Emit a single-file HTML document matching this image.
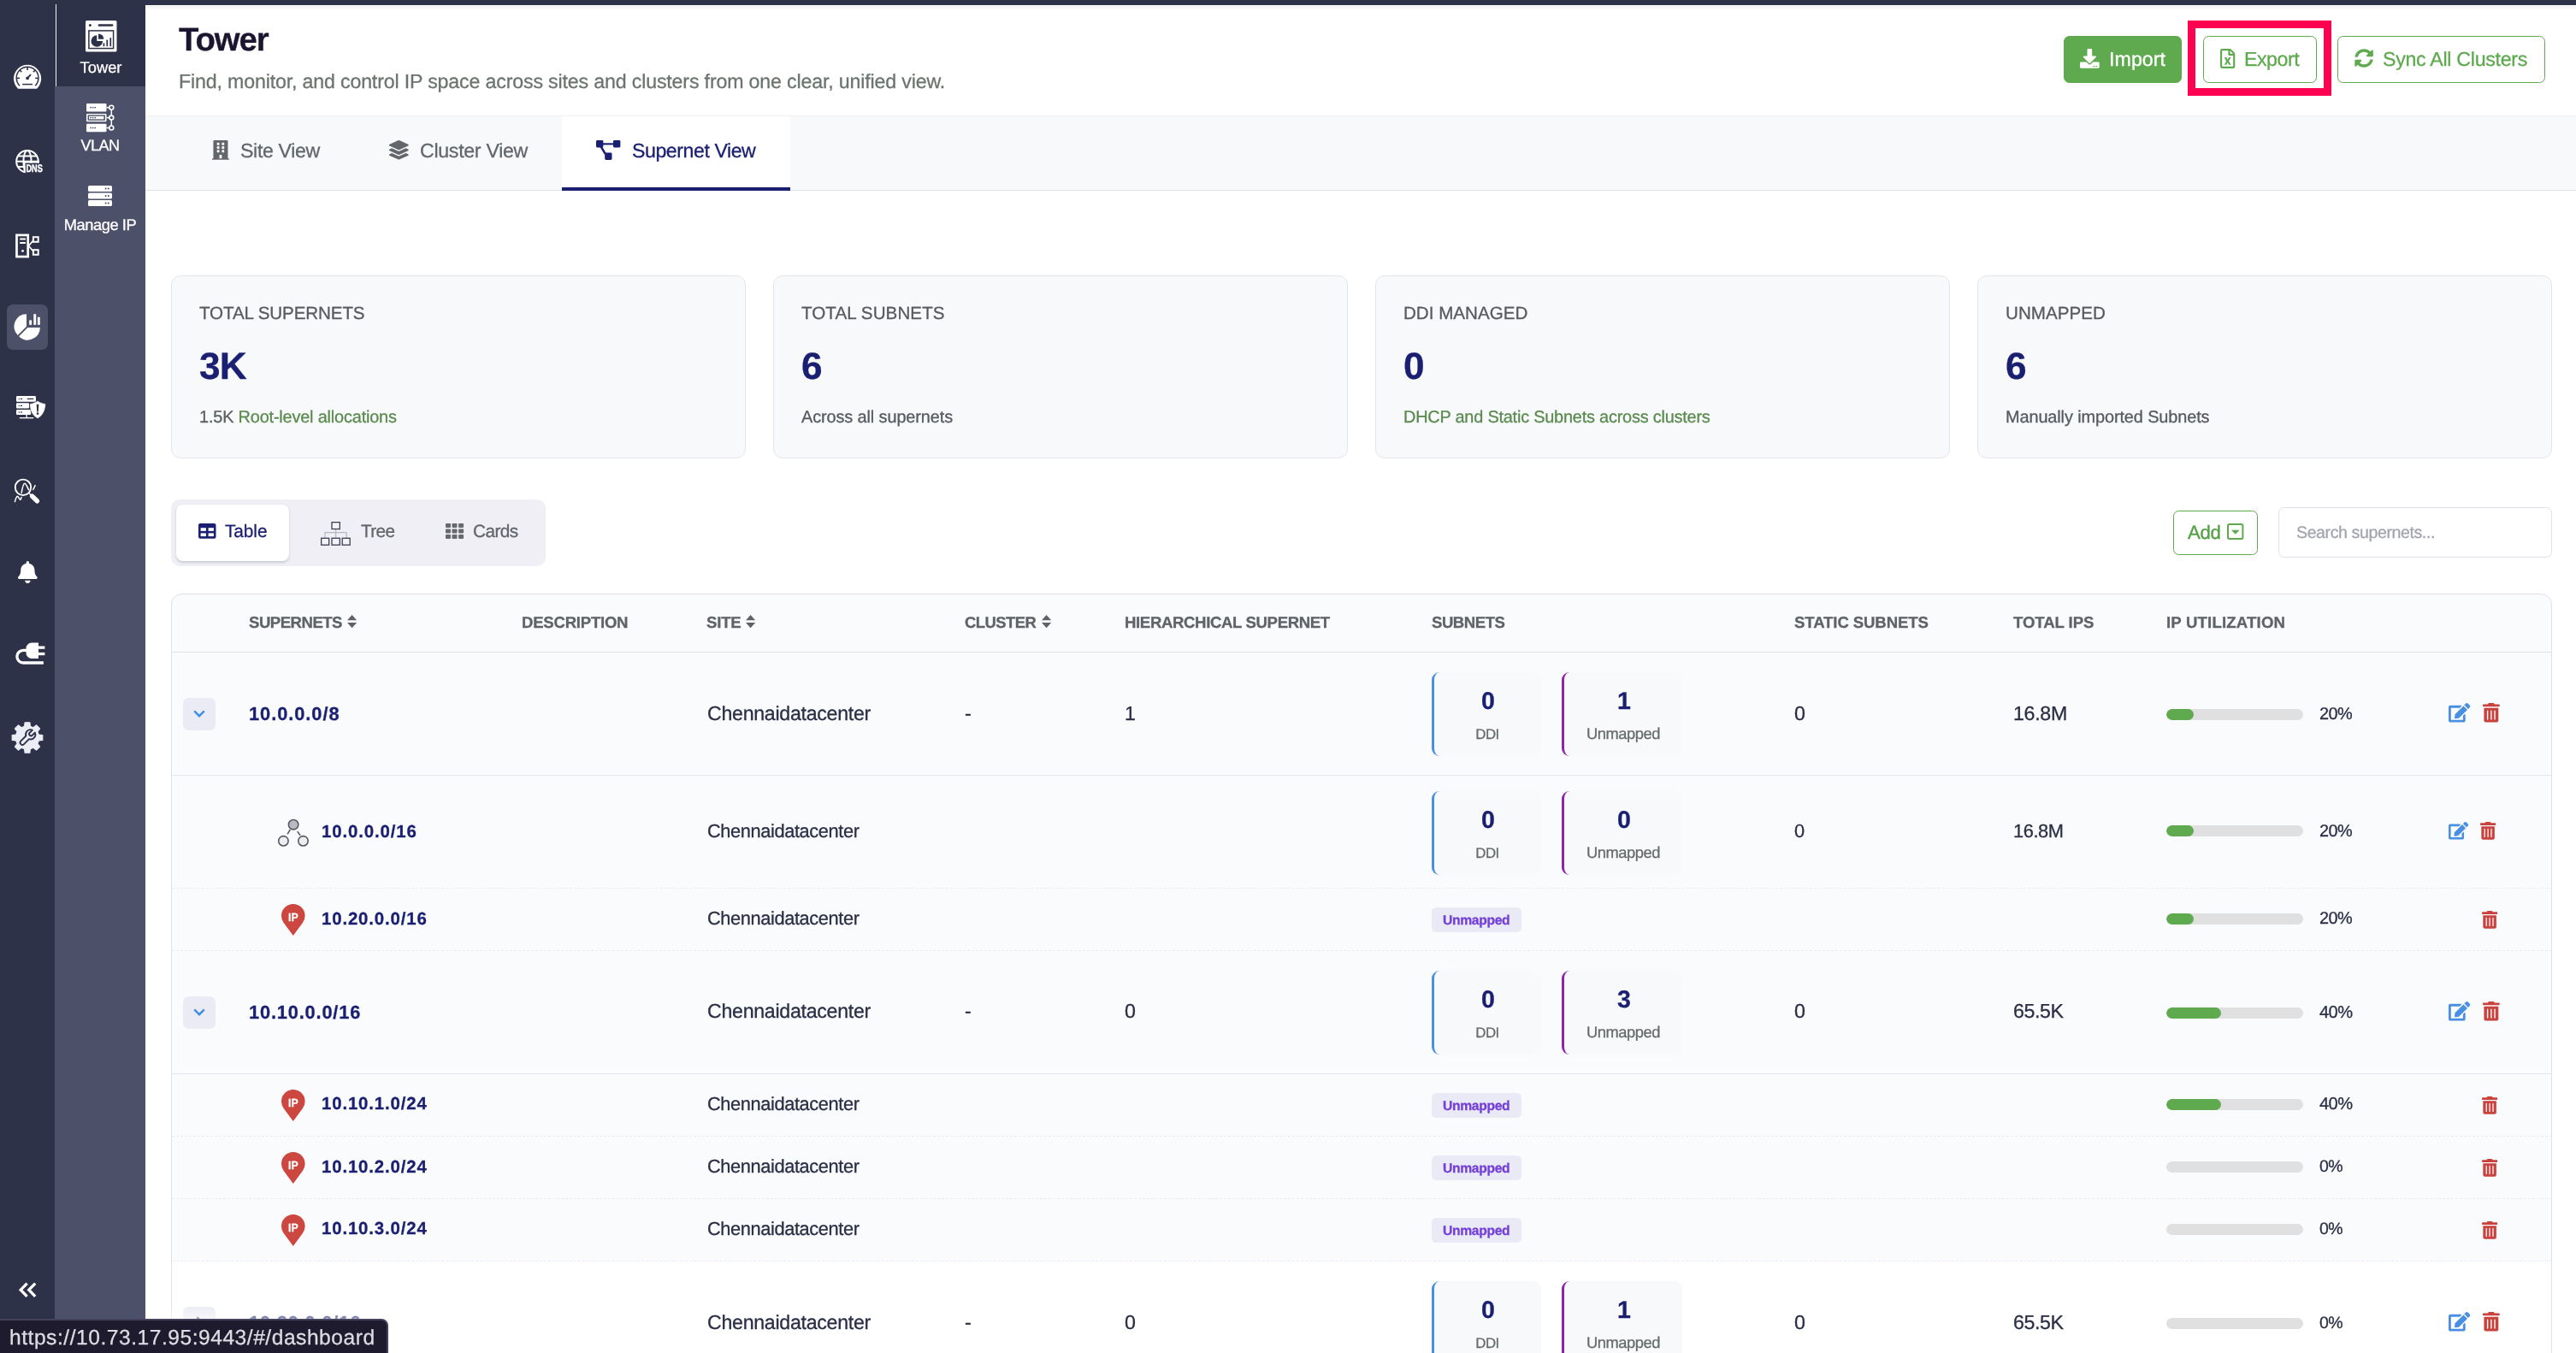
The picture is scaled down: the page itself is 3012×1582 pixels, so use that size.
<!DOCTYPE html><html><head><meta charset="utf-8"><title>Tower</title><style>
*{box-sizing:border-box;margin:0;padding:0}
html,body{width:3012px;height:1582px;background:#fff}
#root{position:relative;width:3012px;height:1582px;overflow:hidden;background:#fff;font-family:"Liberation Sans",sans-serif;color:#2a2f45;text-rendering:geometricPrecision}
.abs{position:absolute}
.t{position:absolute;white-space:nowrap;line-height:1;will-change:transform;-webkit-text-stroke:.3px}
svg{overflow:visible;will-change:transform}
#sb1{left:0;top:0;width:65px;height:1582px;background:#2e3249}
#sb2{left:64px;top:0;width:106px;height:1582px;background:#4c5068}
#topbar{left:0;top:0;width:3012px;height:5.6px;background:#2e3249}
#tw{left:64px;top:0;width:106px;height:101px;background:#2e3249}
#twl{left:64.9px;top:5px;width:1.3px;height:96px;background:#f4f4f4}
#act{left:8px;top:356px;width:48px;height:53px;border-radius:7px;background:#4c5068}
#hshadow{left:170px;top:6.5px;width:2842px;height:5px;background:linear-gradient(#f0f1f4,#fff)}
#tabs{left:170px;top:135px;width:2842px;height:88px;background:#f8f9fb;border-top:1px solid #f0f1f4;border-bottom:1px solid #dfe2e7}
#tabact{left:657px;top:136px;width:267px;height:86.6px;background:#fff;border-bottom:4.5px solid #1a1f71}
.card{position:absolute;top:322px;width:671.5px;height:214px;background:#f8f9fb;border:1px solid #e2e5ea;border-radius:11px}
.btn{position:absolute;top:42px;height:55px;border-radius:6.5px;border:1.2px solid #5fa94f;background:#fff}
#redbox{left:2557.7px;top:23.5px;width:168.4px;height:88.6px;border:9.2px solid #fd0250}
#tog{left:200.4px;top:584px;width:437.5px;height:77.6px;border-radius:10px;background:#efeff5}
#togact{left:205.7px;top:590.2px;width:132.7px;height:66px;border-radius:8px;background:#fff;box-shadow:0 1.5px 3px rgba(40,40,80,.18)}
#addb{left:2541px;top:597.1px;width:98.8px;height:51.8px;border:1.4px solid #5fa94f;border-radius:6.5px;background:#fff}
#srch{left:2664px;top:593px;width:319.6px;height:58.7px;border:1px solid #dfe0ea;border-radius:6.5px;background:#fff}
#tbl{left:200px;top:694px;width:2784px;height:920px;border:1px solid #dfe1e7;border-radius:13px;background:#fafbfd;overflow:hidden}
.row{position:absolute;left:0;width:2783px}
.sbox{position:absolute;height:98px;border-radius:9px;background:#f8f9fb;border-left:3.6px solid}
.bar{position:absolute;height:12.8px;width:160.2px;border-radius:7px;background:#e0e0e0;overflow:hidden}
.bar i{display:block;height:100%;background:#5fa94f;border-radius:7px}
.chev{position:absolute;width:37.6px;height:37.8px;border-radius:6.5px;background:#ebebf5}
.badge{position:absolute;width:105.1px;height:28.7px;border-radius:5.5px;background:#eae9f6}
#status{left:-2px;top:1542.4px;width:455.6px;height:44px;background:#1e1b2e;border:2px solid #43415c;border-top-right-radius:8px}
#glow{left:170px;top:1490px;width:420px;height:92px;overflow:hidden}
#glow i{position:absolute;left:-172px;top:52.4px;width:455.6px;height:44px;border-top-right-radius:8px;box-shadow:0 0 14px 7px rgba(255,255,255,.6)}
</style></head><body><div id="root"><div id="sb1" class="abs"></div><div id="sb2" class="abs"></div><div id="topbar" class="abs"></div>
<div id="tw" class="abs"></div><div id="twl" class="abs"></div><div id="act" class="abs"></div>
<div id="hshadow" class="abs"></div>
<svg class="abs" style="left:15.90px;top:75.30px" width="32.20" height="28.70" viewBox="0 0 32.2 28.7" ><path d="M5.1 28.7 A16.1 16.1 0 1 1 27.1 28.7 Z" fill="#fff"/><path d="M7 25.2 A12.9 12.9 0 1 1 25.2 25.2" fill="none" stroke="#2e3249" stroke-width="1.5"/><g stroke="#2e3249" stroke-width="1.6" stroke-linecap="butt"><path d="M16.1 3.2V7"/><path d="M6.9 6.7L9.3 9.3"/><path d="M25.3 6.7L22.9 9.3"/><path d="M3.4 16.4H7"/><path d="M28.8 16.4H25.2"/><path d="M16.1 16.4L20 12.2" stroke-width="1.9"/><path d="M10.2 23.6H22" stroke-width="1.5"/></g><circle cx="16.1" cy="16.4" r="1.9" fill="#2e3249"/></svg>
<svg class="abs" style="left:18.00px;top:175.00px" width="33.00" height="28.00" viewBox="0 0 33 28" ><g fill="none" stroke="#fff" stroke-width="2"><circle cx="14" cy="13.8" r="12.8"/><ellipse cx="14" cy="13.8" rx="4.6" ry="12.8"/><path d="M1 13.8H27M3 7.6H25M3 20H25"/></g><rect x="11.6" y="15.6" width="22" height="13" fill="#2e3249"/><path d="M10.6 14.6H27.9" stroke="#fff" stroke-width="2" fill="none"/><path d="M10.6 13.6V27" stroke="#fff" stroke-width="2" fill="none"/><text x="12.4" y="26.4" font-family="Liberation Sans,sans-serif" font-weight="700" font-size="12.4" fill="#fff" stroke="#fff" stroke-width=".45" textLength="19.4" lengthAdjust="spacingAndGlyphs">DNS</text></svg>
<svg class="abs" style="left:18.00px;top:273.00px" width="28.50" height="29.00" viewBox="0 0 28.5 29" ><g fill="none" stroke="#fff"><rect x="1.5" y="1.9" width="13.2" height="25.2" stroke-width="2.7"/><path d="M5.2 6.6H12M5.2 11.1H12" stroke-width="2"/><rect x="20.9" y="4.2" width="5.8" height="5.6" stroke-width="2"/><rect x="20.9" y="19.2" width="5.8" height="5.6" stroke-width="2"/><path d="M15.5 14.5L20.4 8.8M15.5 14.5L20.4 20.2" stroke-width="1.7"/></g><circle cx="8.5" cy="20.4" r="1.4" fill="#fff"/></svg>
<svg class="abs" style="left:0.00px;top:0.00px" width="64.00" height="420.00" viewBox="0 0 64 420" ><path d="M31.00 381.65 L31.00 367.15 A14.50 14.50 0 0 0 20.75 391.90 Z" fill="#fff"/><path d="M32.35 382.95 L22.10 393.20 A14.50 14.50 0 0 0 46.85 382.95 Z" fill="#fff"/><rect x="34.2" y="374.4" width="2.9" height="5.4" fill="#fff"/><rect x="39.3" y="367.2" width="2.9" height="12.6" fill="#fff"/><rect x="43.9" y="370.8" width="2.9" height="9" fill="#fff"/></svg>
<svg class="abs" style="left:19.00px;top:463.00px" width="35.00" height="27.00" viewBox="0 0 35 27" ><g fill="#fff"><rect x="0" y="0" width="23" height="6.8" rx="1.2"/><rect x="0" y="8.3" width="15" height="6.3" rx="1"/><rect x="0" y="16" width="17.2" height="6" rx="1"/><rect x="11.5" y="22" width="1.3" height="3.2"/><rect x="3.8" y="25" width="16.4" height="1.3"/><path d="M25 5.6C27.5 7.3 31 8.6 34.3 9.1C34.6 16 31.5 23 25 26.5C18.4 23 15.4 16 15.7 9.1C19 8.6 22.5 7.3 25 5.6Z" stroke="#2e3249" stroke-width="0.6"/></g><g fill="#2e3249"><rect x="12.7" y="2.7" width="7.6" height="1.3" rx=".6"/><circle cx="3.4" cy="3.4" r=".7"/><rect x="5" y="2.8" width="2" height="1.2"/><circle cx="3.4" cy="11.4" r=".7"/><rect x="5" y="10.8" width="2" height="1.2"/><circle cx="3.4" cy="19" r=".7"/><rect x="5" y="18.4" width="2" height="1.2"/><path d="M23.7 9.8H26.3L25.8 18.4H24.2Z"/><circle cx="25" cy="20.6" r="1.3"/></g></svg>
<svg class="abs" style="left:16.00px;top:559.00px" width="32.00" height="31.00" viewBox="0 0 32 31" ><g fill="none" stroke="#fff" stroke-linecap="round" stroke-linejoin="round"><circle cx="11" cy="10.8" r="9.2" stroke-width="1.9"/><path d="M9.2 17.2C10.2 11 11.4 6.4 12.9 6.3C14.2 6.2 15.8 10.2 17.5 13.6" stroke-width="1.6"/><path d="M17.8 17.6L21 20.6" stroke-width="1.4"/><path d="M21.6 21.2L27.4 26.8" stroke-width="5.4"/><path d="M1.4 27.6C2.2 24.6 3.2 21.4 4.4 21.3C5.4 21.2 6.4 24.6 7.6 25.3C8.2 25.6 8.7 23.8 9.1 22.4" stroke-width="1.5"/><path d="M22.8 13.4L25.1 8.6" stroke-width="1.5"/></g></svg>
<svg class="abs" style="left:20.60px;top:655.60px" width="22.70" height="25.90" viewBox="0 0 448 512" ><path d="M224 512c35.32 0 63.97-28.65 63.97-64H160.03c0 35.35 28.65 64 63.97 64zm215.39-149.71c-19.32-20.76-55.47-51.99-55.47-154.29 0-77.7-54.48-139.9-127.94-155.16V32c0-17.67-14.32-32-31.98-32s-31.98 14.33-31.98 32v20.84C118.56 68.1 64.08 130.3 64.08 208c0 102.3-36.15 133.53-55.47 154.29-6 6.45-8.66 14.16-8.61 21.71.11 16.4 12.98 32 32.1 32h383.8c19.12 0 32-15.6 32.1-32 .05-7.55-2.61-15.27-8.61-21.71z" fill="#fff"/></svg>
<svg class="abs" style="left:18.00px;top:750.50px" width="35.00" height="26.00" viewBox="0 0 35 26" ><path d="M19 .5H27V19H19A6.5 6.5 0 0 1 12.5 12.5V7A6.5 6.5 0 0 1 19 .5Z" fill="#fff"/><rect x="27" y="4.5" width="7.4" height="3.3" fill="#fff"/><rect x="27" y="11.9" width="7.4" height="3.3" fill="#fff"/><path d="M13 9.4H9.2A7.3 7.3 0 0 0 9.2 24H32.9" fill="none" stroke="#fff" stroke-width="3.3"/></svg>
<svg class="abs" style="left:0.00px;top:830.00px" width="64.00" height="64.00" viewBox="0 830 64 64" ><polygon points="28.57,849.24 29.12,844.73 34.88,844.73 35.43,849.24 38.95,850.70 42.53,847.90 46.60,851.97 43.80,855.55 45.26,859.07 49.77,859.62 49.77,865.38 45.26,865.93 43.80,869.45 46.60,873.03 42.53,877.10 38.95,874.30 35.43,875.76 34.88,880.27 29.12,880.27 28.57,875.76 25.05,874.30 21.47,877.10 17.40,873.03 20.20,869.45 18.74,865.93 14.23,865.38 14.23,859.62 18.74,859.07 20.20,855.55 17.40,851.97 21.47,847.90 25.05,850.70" fill="#ececf5" stroke="#ececf5" stroke-width="1.2" stroke-linejoin="round"/><g transform="translate(32.30 862.20) rotate(-45)"><path d="M-0.2,-2.6 A5.6 5.6 0 0 1 10,-2.1 L5.6,-2.1 A2.1 2.1 0 0 0 5.6,2.1 L10,2.1 A5.6 5.6 0 0 1 -0.2,2.6 L-8.6,2.6 A2.6 2.6 0 0 1 -8.6,-2.6 Z" fill="none" stroke="#2e3249" stroke-width="1.9" stroke-linejoin="round"/></g></svg>
<svg class="abs" style="left:21.00px;top:1499.00px" width="23.00" height="19.00" viewBox="0 0 23 19" ><g fill="none" stroke="#fff" stroke-width="3.3" stroke-linejoin="miter"><path d="M10.6 1.6L3.2 9.2L10.6 16.8"/><path d="M20.2 1.6L12.8 9.2L20.2 16.8"/></g></svg>
<svg class="abs" style="left:99.80px;top:23.70px" width="36.50" height="36.50" viewBox="0 0 36.5 36.5" ><rect x="0" y="0" width="36.5" height="36.5" rx="1.6" fill="#fff"/><circle cx="5.4" cy="5.4" r="1.5" fill="#2e3249"/><rect x="14.6" y="4.2" width="17.8" height="2.6" rx="1.3" fill="#2e3249"/><rect x="3.9" y="11.9" width="28.7" height="20.7" fill="none" stroke="#2e3249" stroke-width="1.5"/><path d="M13.3 17.2V24H20.1A6.8 6.8 0 1 1 13.3 17.2Z" fill="#2e3249"/><path d="M15 15.4A6.4 6.4 0 0 1 21.4 21.8H15Z" fill="#2e3249"/><rect x="20.6" y="26.4" width="1.7" height="3.8" fill="#2e3249"/><rect x="24.4" y="22.6" width="1.7" height="7.6" fill="#2e3249"/><rect x="28.4" y="20.2" width="1.7" height="10" fill="#2e3249"/></svg>
<div class="t" style="top:70px;font-size:18.3px;color:#fff;letter-spacing:0.047px;left:117.52px;transform:translateX(-50%);">Tower</div>
<svg class="abs" style="left:100.80px;top:120.90px" width="33.00" height="33.00" viewBox="0 0 33 33" ><path d="M29.3 4.7V28.5" stroke="#fff" stroke-width="1.5"/><rect x="0" y="0.0" width="23.5" height="9.4" rx="1" fill="#fff"/><g fill="#4c5068"><rect x="4.2" y="4.0" width="1.6" height="1.4"/><rect x="6.8" y="4.0" width="1.6" height="1.4"/><rect x="9.4" y="4.0" width="1.6" height="1.4"/></g><path d="M23.5 4.7H27" stroke="#fff" stroke-width="1.5"/><circle cx="29.3" cy="4.7" r="2.5" fill="#4c5068" stroke="#fff" stroke-width="1.6"/><rect x="0" y="11.9" width="23.5" height="9.4" rx="1" fill="#fff"/><rect x="1.6" y="13.4" width="20.3" height="6.4" fill="#4c5068"/><rect x="3" y="14.8" width="17.4" height="3.6" fill="#fff"/><g fill="#4c5068"><rect x="4.2" y="15.9" width="1.6" height="1.4"/><rect x="6.8" y="15.9" width="1.6" height="1.4"/><rect x="9.4" y="15.9" width="1.6" height="1.4"/></g><path d="M23.5 16.6H27" stroke="#fff" stroke-width="1.5"/><circle cx="29.3" cy="16.6" r="2.5" fill="#4c5068" stroke="#fff" stroke-width="1.6"/><rect x="0" y="23.8" width="23.5" height="9.4" rx="1" fill="#fff"/><g fill="#4c5068"><rect x="4.2" y="27.8" width="1.6" height="1.4"/><rect x="6.8" y="27.8" width="1.6" height="1.4"/><rect x="9.4" y="27.8" width="1.6" height="1.4"/></g><path d="M23.5 28.5H27" stroke="#fff" stroke-width="1.5"/><circle cx="29.3" cy="28.5" r="2.5" fill="#4c5068" stroke="#fff" stroke-width="1.6"/></svg>
<div class="t" style="top:161px;font-size:18.01px;color:#fff;letter-spacing:-0.508px;left:117.25px;transform:translateX(-50%);">VLAN</div>
<svg class="abs" style="left:103.00px;top:216.70px" width="28.00" height="24.00" viewBox="0 0 28 24" ><rect x="0" y="0.0" width="28" height="7" rx="1.6" fill="#fff"/><circle cx="20.6" cy="3.5" r="1" fill="#4c5068"/><circle cx="23.8" cy="3.5" r="1" fill="#4c5068"/><rect x="0" y="8.5" width="28" height="7" rx="1.6" fill="#fff"/><circle cx="20.6" cy="12.0" r="1" fill="#4c5068"/><circle cx="23.8" cy="12.0" r="1" fill="#4c5068"/><rect x="0" y="17.0" width="28" height="7" rx="1.6" fill="#fff"/><circle cx="20.6" cy="20.5" r="1" fill="#4c5068"/><circle cx="23.8" cy="20.5" r="1" fill="#4c5068"/></svg>
<div class="t" style="top:254px;font-size:18.3px;color:#fff;letter-spacing:-0.447px;left:117.28px;transform:translateX(-50%);">Manage IP</div>
<div class="t" style="top:28px;font-size:38.27px;color:#1b1530;font-weight:700;letter-spacing:-1.072px;left:208.70px;">Tower</div>
<div class="t" style="top:84px;font-size:23.2px;color:#6b756f;letter-spacing:-0.162px;left:208.70px;">Find, monitor, and control IP space across sites and clusters from one clear, unified view.</div>
<div class="btn" style="left:2413px;width:138px;background:#5fa94f"></div>
<svg class="abs" style="left:2432.10px;top:57.30px" width="22.70" height="22.70" viewBox="0 0 512 512" ><path d="M216 0h80c13.3 0 24 10.7 24 24v168h87.7c17.8 0 26.7 21.5 14.1 34.1L269.7 378.3c-7.5 7.5-19.8 7.5-27.3 0L90.1 226.1c-12.6-12.6-3.700-34.1 14.100-34.1H192V24c0-13.300 10.700-24 24-24zm296 376v112c0 13.300-10.700 24-24 24H24c-13.300 0-24-10.700-24-24V376c0-13.300 10.700-24 24-24h146.700l49 49c20.100 20.100 52.500 20.100 72.600 0l49-49H488c13.300 0 24 10.700 24 24zm-124 88c0-11-9-20-20-20s-20 9-20 20 9 20 20 20 20-9 20-20zm64 0c0-11-9-20-20-20s-20 9-20 20 9 20 20 20 20-9 20-20z" fill="#fff"/></svg>
<div class="t" style="top:58px;font-size:23.2px;color:#fff;letter-spacing:0.064px;left:2465.60px;">Import</div>
<div id="redbox" class="abs"></div>
<div class="btn" style="left:2576px;width:133px"></div>
<svg class="abs" style="left:2595.80px;top:57.00px" width="17.30" height="23.00" viewBox="0 0 384 512" ><path d="M369.9 97.9L286 14C277 5 264.8-.1 252.1-.1H48C21.5 0 0 21.5 0 48v416c0 26.500 21.500 48 48 48h288c26.500 0 48-21.500 48-48V131.900c0-12.700-5.100-25-14.100-34zM332.100 128H256V51.900l76.100 76.100zM48 464V48h160v104c0 13.300 10.700 24 24 24h104v288H48zm212-240h-28.800c-4.400 0-8.400 2.400-10.500 6.300-18 33.100-22.200 42.400-28.600 57.700-13.900-29.100-6.900-17.300-28.600-57.700-2.100-3.900-6.200-6.300-10.600-6.300H124c-9.300 0-15 10-10.400 18l46.300 78-46.300 78c-4.700 8 1.100 18 10.400 18h28.900c4.400 0 8.400-2.400 10.500-6.300 21.700-40 23-45 28.600-57.700 14.900 30.200 5.900 15.900 28.600 57.700 2.100 3.900 6.200 6.300 10.600 6.300H260c9.300 0 15-10 10.400-18L224 320c.7-1.100 30.300-50.500 46.300-78 4.700-8-1.100-18-10.300-18z" fill="#5fa94f"/></svg>
<div class="t" style="top:58px;font-size:23.2px;color:#5fa94f;letter-spacing:-0.486px;left:2624.00px;">Export</div>
<div class="btn" style="left:2732.8px;width:243.3px"></div>
<svg class="abs" style="left:2753.30px;top:57.40px" width="22.20" height="22.20" viewBox="0 0 512 512" ><path d="M370.72 133.28C339.458 104.008 298.888 87.962 255.848 88c-77.458.068-144.328 53.178-162.791 126.85-1.344 5.363-6.122 9.15-11.651 9.15H24.103c-7.498 0-13.194-6.807-11.807-14.176C33.933 94.924 134.813 8 256 8c66.448 0 126.791 26.136 171.315 68.685L463.03 40.97C478.149 25.851 504 36.559 504 57.941V192c0 13.255-10.745 24-24 24H345.941c-21.382 0-32.09-25.851-16.971-40.971l41.75-41.749zM32 296h134.059c21.382 0 32.09 25.851 16.971 40.971l-41.75 41.75c31.262 29.273 71.835 45.319 114.876 45.28 77.418-.07 144.315-53.144 162.787-126.849 1.344-5.363 6.122-9.15 11.651-9.15h57.304c7.498 0 13.194 6.807 11.807 14.176C478.067 417.076 377.187 504 256 504c-66.448 0-126.791-26.136-171.315-68.685L48.970 471.030C33.851 486.149 8 475.441 8 454.059V320c0-13.255 10.745-24 24-24z" fill="#5fa94f"/></svg>
<div class="t" style="top:58px;font-size:23.2px;color:#5fa94f;letter-spacing:-0.286px;left:2786.10px;">Sync All Clusters</div>
<div id="tabs" class="abs"></div><div id="tabact" class="abs"></div>
<svg class="abs" style="left:248.00px;top:164.10px" width="19.90" height="22.70" viewBox="0 0 448 512" ><path d="M436 480h-20V24c0-13.255-10.745-24-24-24H56C42.745 0 32 10.745 32 24v456H12c-6.627 0-12 5.373-12 12v20h448v-20c0-6.627-5.373-12-12-12zM128 76c0-6.627 5.373-12 12-12h40c6.627 0 12 5.373 12 12v40c0 6.627-5.373 12-12 12h-40c-6.627 0-12-5.373-12-12V76zm0 96c0-6.627 5.373-12 12-12h40c6.627 0 12 5.373 12 12v40c0 6.627-5.373 12-12 12h-40c-6.627 0-12-5.373-12-12v-40zm52 148h-40c-6.627 0-12-5.373-12-12v-40c0-6.627 5.373-12 12-12h40c6.627 0 12 5.373 12 12v40c0 6.627-5.373 12-12 12zm76 160h-64v-84c0-6.627 5.373-12 12-12h40c6.627 0 12 5.373 12 12v84zm64-172c0 6.627-5.373 12-12 12h-40c-6.627 0-12-5.373-12-12v-40c0-6.627 5.373-12 12-12h40c6.627 0 12 5.373 12 12v40zm0-96c0 6.627-5.373 12-12 12h-40c-6.627 0-12-5.373-12-12v-40c0-6.627 5.373-12 12-12h40c6.627 0 12 5.373 12 12v40zm0-96c0 6.627-5.373 12-12 12h-40c-6.627 0-12-5.373-12-12V76c0-6.627 5.373-12 12-12h40c6.627 0 12 5.373 12 12v40z" fill="#63676c"/></svg>
<div class="t" style="top:165px;font-size:23.2px;color:#63676c;letter-spacing:-0.361px;left:281.20px;">Site View</div>
<svg class="abs" style="left:454.60px;top:164.10px" width="22.70" height="22.70" viewBox="0 0 512 512" ><path d="M12.41 148.02l232.94 105.67c6.8 3.09 14.49 3.09 21.29 0l232.94-105.67c16.55-7.51 16.55-32.52 0-40.030L266.65 2.31a25.607 25.607 0 0 0-21.29 0L12.41 107.98c-16.55 7.51-16.55 32.53 0 40.04zm487.18 88.28l-58.09-26.33-161.64 73.27c-7.56 3.43-15.59 5.17-23.86 5.17s-16.290-1.74-23.860-5.17L70.51 209.97l-58.1 26.33c-16.55 7.5-16.55 32.5 0 40l232.94 105.590c6.8 3.08 14.49 3.08 21.29 0L499.590 276.300c16.55-7.5 16.55-32.5 0-40zm0 127.8l-57.87-26.23-161.86 73.37c-7.56 3.43-15.59 5.17-23.86 5.17s-16.290-1.74-23.860-5.17L70.29 337.87 12.41 364.100c-16.55 7.5-16.55 32.5 0 40l232.94 105.590c6.8 3.08 14.49 3.08 21.29 0L499.590 404.100c16.55-7.5 16.55-32.5 0-40z" fill="#63676c"/></svg>
<div class="t" style="top:165px;font-size:23.2px;color:#63676c;letter-spacing:-0.311px;left:490.90px;">Cluster View</div>
<svg class="abs" style="left:697.00px;top:164.10px" width="28.40" height="23.00" viewBox="0 0 28.4 23" ><g fill="#1a1f71"><rect x="0" y="0" width="8.4" height="8.4" rx="1.4"/><rect x="20" y="0" width="8.4" height="8.4" rx="1.4"/><rect x="10.2" y="14.6" width="8.3" height="8.4" rx="1.4"/><rect x="8" y="3.3" width="12.5" height="2.1"/><path d="M4.2 7.6L6.6 6.4L12 15.4L9.7 16.6Z"/></g></svg>
<div class="t" style="top:165px;font-size:23.2px;color:#1a1f71;letter-spacing:-0.461px;left:739.00px;">Supernet View</div>
<div class="card" style="left:200.4px"></div>
<div class="t" style="top:357px;font-size:20.6px;color:#585a5f;letter-spacing:-0.121px;left:233.40px;">TOTAL SUPERNETS</div>
<div class="t" style="top:407px;font-size:44.2px;color:#1a1f71;font-weight:700;letter-spacing:-0.900px;left:233.40px;">3K</div>
<div class="t" style="top:479px;font-size:19.9px;color:#5a8a4e;letter-spacing:-0.175px;left:233.40px;"><span style="color:#5b6160">1.5K</span> Root-level allocations</div>
<div class="card" style="left:904.3px"></div>
<div class="t" style="top:357px;font-size:20.6px;color:#585a5f;letter-spacing:0.069px;left:937.30px;">TOTAL SUBNETS</div>
<div class="t" style="top:407px;font-size:44.2px;color:#1a1f71;font-weight:700;left:937.30px;">6</div>
<div class="t" style="top:479px;font-size:19.9px;color:#555a60;letter-spacing:-0.105px;left:937.30px;">Across all supernets</div>
<div class="card" style="left:1608.2px"></div>
<div class="t" style="top:357px;font-size:20.6px;color:#585a5f;left:1641.20px;">DDI MANAGED</div>
<div class="t" style="top:407px;font-size:44.2px;color:#1a1f71;font-weight:700;left:1641.20px;">0</div>
<div class="t" style="top:479px;font-size:19.9px;color:#5a8a4e;letter-spacing:-0.207px;left:1641.20px;">DHCP and Static Subnets across clusters</div>
<div class="card" style="left:2312.1px"></div>
<div class="t" style="top:357px;font-size:20.6px;color:#585a5f;letter-spacing:0.023px;left:2345.10px;">UNMAPPED</div>
<div class="t" style="top:407px;font-size:44.2px;color:#1a1f71;font-weight:700;left:2345.10px;">6</div>
<div class="t" style="top:479px;font-size:19.9px;color:#555a60;letter-spacing:-0.105px;left:2345.10px;">Manually imported Subnets</div>
<div id="tog" class="abs"></div><div id="togact" class="abs"></div>
<svg class="abs" style="left:232.00px;top:612.10px" width="20.50" height="17.80" viewBox="0 0 20.5 17.8" ><rect x="0" y="0" width="20.5" height="17.8" rx="2" fill="#1a1f71"/><g fill="#fff"><rect x="2.6" y="5.2" width="6.3" height="3.7"/><rect x="11.6" y="5.2" width="6.3" height="3.7"/><rect x="2.6" y="11.4" width="6.3" height="3.7"/><rect x="11.6" y="11.4" width="6.3" height="3.7"/></g></svg>
<div class="t" style="top:612px;font-size:20.8px;color:#1a1f71;letter-spacing:-0.064px;left:262.90px;">Table</div>
<svg class="abs" style="left:374.50px;top:610.20px" width="35.00" height="28.00" viewBox="0 0 35 28" ><g fill="none" stroke="#b4b6c4" stroke-width="1.2"><path d="M17.6 8.6V19.3M5 19.3V12.7H30.2V19.3"/></g><g fill="#f3f3f8" stroke="#3c3f58" stroke-width="1.3"><rect x="13" y=".65" width="9.3" height="7.9"/><rect x=".65" y="19.3" width="9" height="7.9"/><rect x="13" y="19.3" width="9.3" height="7.9"/><rect x="25.2" y="19.3" width="9" height="7.9"/></g></svg>
<div class="t" style="top:612px;font-size:20.71px;color:#62666b;letter-spacing:-0.578px;left:422.10px;">Tree</div>
<svg class="abs" style="left:520.90px;top:612.10px" width="21.10" height="17.90" viewBox="0 0 21.1 17.9" ><g fill="#666a6e"><rect x="0.0" y="0.0" width="6" height="4.9" rx=".8"/><rect x="0.0" y="6.5" width="6" height="4.9" rx=".8"/><rect x="0.0" y="13.0" width="6" height="4.9" rx=".8"/><rect x="7.5" y="0.0" width="6" height="4.9" rx=".8"/><rect x="7.5" y="6.5" width="6" height="4.9" rx=".8"/><rect x="7.5" y="13.0" width="6" height="4.9" rx=".8"/><rect x="15.1" y="0.0" width="6" height="4.9" rx=".8"/><rect x="15.1" y="6.5" width="6" height="4.9" rx=".8"/><rect x="15.1" y="13.0" width="6" height="4.9" rx=".8"/></g></svg>
<div class="t" style="top:612px;font-size:20.77px;color:#62666b;letter-spacing:-0.581px;left:552.70px;">Cards</div>
<div id="addb" class="abs"></div>
<div class="t" style="top:612px;font-size:22.2px;color:#55a046;letter-spacing:-0.295px;left:2558.20px;-webkit-text-stroke:.35px #55a046;">Add</div>
<svg class="abs" style="left:2603.50px;top:612.00px" width="19.40" height="18.90" viewBox="0 0 19.4 18.9" ><rect x="1" y="1" width="17.4" height="16.9" rx="1.6" fill="none" stroke="#5fa94f" stroke-width="2"/><path d="M5 7.7H14.6L9.8 12.8Z" fill="#5fa94f"/></svg>
<div id="srch" class="abs"></div>
<div class="t" style="top:614px;font-size:19.6px;color:#a2a5ad;letter-spacing:-0.421px;left:2684.50px;">Search supernets...</div>
<div id="tbl" class="abs"><div class="t" style="top:24px;font-size:18.6px;color:#5f6368;font-weight:700;letter-spacing:-0.517px;left:90.00px;">SUPERNETS</div><div class="t" style="top:24px;font-size:18.6px;color:#5f6368;font-weight:700;letter-spacing:-0.253px;left:409.20px;">DESCRIPTION</div><div class="t" style="top:24px;font-size:18.6px;color:#5f6368;font-weight:700;letter-spacing:-0.207px;left:625.20px;">SITE</div><div class="t" style="top:24px;font-size:18.41px;color:#5f6368;font-weight:700;letter-spacing:-0.517px;left:927.10px;">CLUSTER</div><div class="t" style="top:24px;font-size:18.6px;color:#5f6368;font-weight:700;letter-spacing:-0.371px;left:1114.20px;">HIERARCHICAL SUPERNET</div><div class="t" style="top:24px;font-size:18.6px;color:#5f6368;font-weight:700;letter-spacing:-0.480px;left:1473.00px;">SUBNETS</div><div class="t" style="top:24px;font-size:18.6px;color:#5f6368;font-weight:700;letter-spacing:-0.115px;left:1896.70px;">STATIC SUBNETS</div><div class="t" style="top:24px;font-size:18.6px;color:#5f6368;font-weight:700;letter-spacing:-0.085px;left:2152.70px;">TOTAL IPS</div><div class="t" style="top:24px;font-size:18.6px;color:#5f6368;font-weight:700;letter-spacing:0.178px;left:2331.90px;">IP UTILIZATION</div><svg class="abs" style="left:204.90px;top:24.10px" width="11.20" height="15.30" viewBox="0 0 11.2 15.3" ><path d="M0 6.2L5.6 0L11.2 6.2Z M0 9.1H11.2L5.6 15.3Z" fill="#5f6368"/></svg><svg class="abs" style="left:671.20px;top:24.10px" width="11.20" height="15.30" viewBox="0 0 11.2 15.3" ><path d="M0 6.2L5.6 0L11.2 6.2Z M0 9.1H11.2L5.6 15.3Z" fill="#5f6368"/></svg><svg class="abs" style="left:1016.50px;top:24.10px" width="11.20" height="15.30" viewBox="0 0 11.2 15.3" ><path d="M0 6.2L5.6 0L11.2 6.2Z M0 9.1H11.2L5.6 15.3Z" fill="#5f6368"/></svg><div class="abs" style="left:0;top:67.0px;width:2783px;height:1px;background:#e0e2e8"></div><div class="chev" style="left:13.2px;top:120.8px"></div><svg class="abs" style="left:25.10px;top:134.70px" width="14.00" height="9.00" viewBox="0 0 14 9" ><path d="M1.2 1.3L7 7.2L12.8 1.3" fill="none" stroke="#3f8fe0" stroke-width="2.4"/></svg><div class="t" style="top:129px;font-size:21.8px;color:#1a1f71;font-weight:700;letter-spacing:0.953px;left:90.20px;">10.0.0.0/8</div><div class="t" style="top:128px;font-size:23.2px;color:#2a2f45;letter-spacing:-0.291px;left:625.80px;">Chennaidatacenter</div><div class="t" style="top:128px;font-size:23.2px;color:#2a2f45;left:927.30px;">-</div><div class="t" style="top:128px;font-size:23.2px;color:#2a2f45;left:1114.20px;">1</div><div class="sbox" style="left:1472.9px;top:90.8px;width:128px;border-color:#4a90e2"></div><div class="sbox" style="left:1624.9px;top:90.8px;width:141.6px;border-color:#8e24aa"></div><div class="t" style="top:111px;font-size:28.5px;color:#1a1f71;font-weight:700;left:1538.60px;transform:translateX(-50%);">0</div><div class="t" style="top:156px;font-size:16.87px;color:#666b6b;letter-spacing:-0.482px;left:1538.36px;transform:translateX(-50%);">DDI</div><div class="t" style="top:111px;font-size:28.5px;color:#1a1f71;font-weight:700;left:1697.50px;transform:translateX(-50%);">1</div><div class="t" style="top:154px;font-size:18.3px;color:#666b6b;letter-spacing:-0.455px;left:1697.27px;transform:translateX(-50%);">Unmapped</div><div class="t" style="top:128px;font-size:23.2px;color:#2a2f45;left:1896.70px;">0</div><div class="t" style="top:128px;font-size:23.2px;color:#2a2f45;letter-spacing:-0.291px;left:2152.70px;">16.8M</div><div class="bar" style="left:2331.8px;top:134.0px"><i style="width:20%"></i></div><div class="t" style="top:131px;font-size:19.83px;color:#2a2f45;letter-spacing:-0.562px;left:2511.10px;">20%</div><svg class="abs" style="left:2662.30px;top:127.20px" width="25.30" height="22.50" viewBox="0 0 576 512" ><path d="M402.6 83.2l90.2 90.2c3.8 3.8 3.8 10 0 13.8L274.4 405.6l-92.8 10.3c-12.4 1.4-22.9-9.1-21.5-21.500l10.300-92.800L388.800 83.200c3.800-3.800 10-3.800 13.800 0zm162-22.900l-48.800-48.800c-15.200-15.200-39.900-15.200-55.200 0l-35.400 35.400c-3.800 3.800-3.800 10 0 13.800l90.200 90.200c3.800 3.800 10 3.800 13.800 0l35.400-35.400c15.200-15.300 15.200-40 0-55.200zM384 346.200V448H64V128h229.800c3.200 0 6.200-1.300 8.500-3.500l40-40c7.600-7.600 2.200-20.500-8.500-20.500H48C21.500 64 0 85.500 0 112v352c0 26.500 21.500 48 48 48h352c26.500 0 48-21.500 48-48V306.200c0-10.700-12.900-16-20.500-8.500l-40 40c-2.200 2.300-3.500 5.300-3.500 8.500z" fill="#4a90e2"/></svg><svg class="abs" style="left:2702.10px;top:127.20px" width="19.70" height="22.50" viewBox="0 0 448 512" ><path d="M32 464a48 48 0 0 0 48 48h288a48 48 0 0 0 48-48V128H32zm272-256a16 16 0 0 1 32 0v224a16 16 0 0 1-32 0zm-96 0a16 16 0 0 1 32 0v224a16 16 0 0 1-32 0zm-96 0a16 16 0 0 1 32 0v224a16 16 0 0 1-32 0zM432 32H312l-9.400-18.700A24 24 0 0 0 281.100 0H166.800a23.720 23.720 0 0 0-21.400 13.300L136 32H16A16 16 0 0 0 0 48v32a16 16 0 0 0 16 16h416a16 16 0 0 0 16-16V48a16 16 0 0 0-16-16z" fill="#c9433e"/></svg><div class="abs" style="left:0;top:211.0px;width:2783px;height:1px;background:#e3e5f0"></div><svg class="abs" style="left:123.00px;top:262.00px" width="38.00" height="34.00" viewBox="0 0 38 34" ><g stroke="#555a5f" stroke-width="1.6"><path d="M15.3 12.8L12.1 18.4M23.7 15.1L27 19.8" fill="none"/><circle cx="19.1" cy="7.2" r="5.7" fill="#b8bac4"/><circle cx="7.4" cy="26.3" r="5.7" fill="#ececf3"/><circle cx="30.5" cy="26.3" r="5.7" fill="#ececf3"/></g></svg><div class="t" style="top:268px;font-size:20.4px;color:#1a1f71;font-weight:700;letter-spacing:0.868px;left:174.90px;">10.0.0.0/16</div><div class="t" style="top:266px;font-size:21.8px;color:#2a2f45;letter-spacing:-0.388px;left:625.80px;">Chennaidatacenter</div><div class="sbox" style="left:1472.9px;top:229.7px;width:128px;border-color:#4a90e2"></div><div class="sbox" style="left:1624.9px;top:229.7px;width:141.6px;border-color:#8e24aa"></div><div class="t" style="top:250px;font-size:28.5px;color:#1a1f71;font-weight:700;left:1538.60px;transform:translateX(-50%);">0</div><div class="t" style="top:295px;font-size:16.87px;color:#666b6b;letter-spacing:-0.482px;left:1538.36px;transform:translateX(-50%);">DDI</div><div class="t" style="top:250px;font-size:28.5px;color:#1a1f71;font-weight:700;left:1697.50px;transform:translateX(-50%);">0</div><div class="t" style="top:293px;font-size:18.3px;color:#666b6b;letter-spacing:-0.455px;left:1697.27px;transform:translateX(-50%);">Unmapped</div><div class="t" style="top:266px;font-size:21.8px;color:#2a2f45;left:1896.70px;">0</div><div class="t" style="top:266px;font-size:21.8px;color:#2a2f45;letter-spacing:-0.399px;left:2152.70px;">16.8M</div><div class="bar" style="left:2331.8px;top:270.4px"><i style="width:20%"></i></div><div class="t" style="top:268px;font-size:19.83px;color:#2a2f45;letter-spacing:-0.562px;left:2511.10px;">20%</div><svg class="abs" style="left:2661.90px;top:266.10px" width="23.20" height="20.60" viewBox="0 0 576 512" ><path d="M402.6 83.2l90.2 90.2c3.8 3.8 3.8 10 0 13.8L274.4 405.6l-92.8 10.3c-12.4 1.4-22.9-9.1-21.5-21.500l10.300-92.800L388.800 83.200c3.800-3.800 10-3.800 13.800 0zm162-22.900l-48.800-48.800c-15.200-15.200-39.900-15.200-55.200 0l-35.400 35.400c-3.800 3.800-3.800 10 0 13.800l90.200 90.200c3.800 3.800 10 3.800 13.800 0l35.400-35.400c15.200-15.300 15.200-40 0-55.200zM384 346.200V448H64V128h229.800c3.200 0 6.200-1.300 8.500-3.500l40-40c7.600-7.600 2.200-20.500-8.500-20.500H48C21.500 64 0 85.500 0 112v352c0 26.500 21.500 48 48 48h352c26.500 0 48-21.500 48-48V306.200c0-10.700-12.900-16-20.500-8.500l-40 40c-2.200 2.300-3.500 5.300-3.500 8.500z" fill="#4a90e2"/></svg><svg class="abs" style="left:2699.00px;top:266.10px" width="18.20" height="20.70" viewBox="0 0 448 512" ><path d="M32 464a48 48 0 0 0 48 48h288a48 48 0 0 0 48-48V128H32zm272-256a16 16 0 0 1 32 0v224a16 16 0 0 1-32 0zm-96 0a16 16 0 0 1 32 0v224a16 16 0 0 1-32 0zm-96 0a16 16 0 0 1 32 0v224a16 16 0 0 1-32 0zM432 32H312l-9.400-18.700A24 24 0 0 0 281.100 0H166.800a23.720 23.720 0 0 0-21.400 13.300L136 32H16A16 16 0 0 0 0 48v32a16 16 0 0 0 16 16h416a16 16 0 0 0 16-16V48a16 16 0 0 0-16-16z" fill="#c9433e"/></svg><div class="abs" style="left:0;top:343.0px;width:2783px;height:0;border-top:1px dashed #eaecf2"></div><svg class="abs" style="left:128.30px;top:362.00px" width="27.60" height="37.00" viewBox="0 0 27.6 37" ><path d="M13.8 37L2.71 22A13.8 13.8 0 1 1 24.89 22Z" fill="#cc4740"/><text x="13.9" y="19.8" text-anchor="middle" font-family="Liberation Sans,sans-serif" font-weight="700" font-size="13.3" fill="#fff" stroke="#fff" stroke-width=".25" textLength="11.6" lengthAdjust="spacingAndGlyphs">IP</text></svg><div class="t" style="top:370px;font-size:20.4px;color:#1a1f71;font-weight:700;letter-spacing:0.859px;left:174.90px;">10.20.0.0/16</div><div class="t" style="top:368px;font-size:21.8px;color:#2a2f45;letter-spacing:-0.388px;left:625.80px;">Chennaidatacenter</div><div class="badge" style="left:1473.0px;top:365.9px"></div><div class="t" style="top:374px;font-size:15.7px;color:#7340d8;font-weight:700;letter-spacing:-0.345px;left:1486.00px;">Unmapped</div><div class="bar" style="left:2331.8px;top:372.9px"><i style="width:20%"></i></div><div class="t" style="top:370px;font-size:19.83px;color:#2a2f45;letter-spacing:-0.562px;left:2511.10px;">20%</div><svg class="abs" style="left:2701.00px;top:369.80px" width="18.20" height="20.70" viewBox="0 0 448 512" ><path d="M32 464a48 48 0 0 0 48 48h288a48 48 0 0 0 48-48V128H32zm272-256a16 16 0 0 1 32 0v224a16 16 0 0 1-32 0zm-96 0a16 16 0 0 1 32 0v224a16 16 0 0 1-32 0zm-96 0a16 16 0 0 1 32 0v224a16 16 0 0 1-32 0zM432 32H312l-9.400-18.700A24 24 0 0 0 281.100 0H166.800a23.720 23.720 0 0 0-21.400 13.300L136 32H16A16 16 0 0 0 0 48v32a16 16 0 0 0 16 16h416a16 16 0 0 0 16-16V48a16 16 0 0 0-16-16z" fill="#c9433e"/></svg><div class="abs" style="left:0;top:416.0px;width:2783px;height:0;border-top:1px dashed #eaecf2"></div><div class="chev" style="left:13.2px;top:469.8px"></div><svg class="abs" style="left:25.10px;top:483.70px" width="14.00" height="9.00" viewBox="0 0 14 9" ><path d="M1.2 1.3L7 7.2L12.8 1.3" fill="none" stroke="#3f8fe0" stroke-width="2.4"/></svg><div class="t" style="top:478px;font-size:21.8px;color:#1a1f71;font-weight:700;letter-spacing:0.825px;left:90.20px;">10.10.0.0/16</div><div class="t" style="top:476px;font-size:23.2px;color:#2a2f45;letter-spacing:-0.291px;left:625.80px;">Chennaidatacenter</div><div class="t" style="top:476px;font-size:23.2px;color:#2a2f45;left:927.30px;">-</div><div class="t" style="top:476px;font-size:23.2px;color:#2a2f45;left:1114.20px;">0</div><div class="sbox" style="left:1472.9px;top:439.8px;width:128px;border-color:#4a90e2"></div><div class="sbox" style="left:1624.9px;top:439.8px;width:141.6px;border-color:#8e24aa"></div><div class="t" style="top:460px;font-size:28.5px;color:#1a1f71;font-weight:700;left:1538.60px;transform:translateX(-50%);">0</div><div class="t" style="top:505px;font-size:16.87px;color:#666b6b;letter-spacing:-0.482px;left:1538.36px;transform:translateX(-50%);">DDI</div><div class="t" style="top:460px;font-size:28.5px;color:#1a1f71;font-weight:700;left:1697.50px;transform:translateX(-50%);">3</div><div class="t" style="top:503px;font-size:18.3px;color:#666b6b;letter-spacing:-0.455px;left:1697.27px;transform:translateX(-50%);">Unmapped</div><div class="t" style="top:476px;font-size:23.2px;color:#2a2f45;left:1896.70px;">0</div><div class="t" style="top:476px;font-size:23.2px;color:#2a2f45;letter-spacing:-0.422px;left:2152.70px;">65.5K</div><div class="bar" style="left:2331.8px;top:483.0px"><i style="width:40%"></i></div><div class="t" style="top:479px;font-size:20.09px;color:#2a2f45;letter-spacing:-0.562px;left:2511.10px;">40%</div><svg class="abs" style="left:2662.30px;top:476.20px" width="25.30" height="22.50" viewBox="0 0 576 512" ><path d="M402.6 83.2l90.2 90.2c3.8 3.8 3.8 10 0 13.8L274.4 405.6l-92.8 10.3c-12.4 1.4-22.9-9.1-21.5-21.500l10.300-92.800L388.800 83.200c3.800-3.800 10-3.800 13.800 0zm162-22.900l-48.800-48.800c-15.200-15.200-39.900-15.200-55.200 0l-35.400 35.400c-3.800 3.800-3.800 10 0 13.800l90.200 90.200c3.800 3.800 10 3.800 13.800 0l35.400-35.400c15.200-15.300 15.200-40 0-55.200zM384 346.200V448H64V128h229.800c3.200 0 6.200-1.300 8.500-3.500l40-40c7.600-7.600 2.200-20.500-8.500-20.500H48C21.500 64 0 85.500 0 112v352c0 26.500 21.500 48 48 48h352c26.500 0 48-21.500 48-48V306.200c0-10.700-12.900-16-20.500-8.500l-40 40c-2.200 2.300-3.500 5.300-3.500 8.500z" fill="#4a90e2"/></svg><svg class="abs" style="left:2702.10px;top:476.20px" width="19.70" height="22.50" viewBox="0 0 448 512" ><path d="M32 464a48 48 0 0 0 48 48h288a48 48 0 0 0 48-48V128H32zm272-256a16 16 0 0 1 32 0v224a16 16 0 0 1-32 0zm-96 0a16 16 0 0 1 32 0v224a16 16 0 0 1-32 0zm-96 0a16 16 0 0 1 32 0v224a16 16 0 0 1-32 0zM432 32H312l-9.400-18.700A24 24 0 0 0 281.100 0H166.800a23.720 23.720 0 0 0-21.400 13.300L136 32H16A16 16 0 0 0 0 48v32a16 16 0 0 0 16 16h416a16 16 0 0 0 16-16V48a16 16 0 0 0-16-16z" fill="#c9433e"/></svg><div class="abs" style="left:0;top:560.0px;width:2783px;height:1px;background:#e3e5f0"></div><svg class="abs" style="left:128.30px;top:579.00px" width="27.60" height="37.00" viewBox="0 0 27.6 37" ><path d="M13.8 37L2.71 22A13.8 13.8 0 1 1 24.89 22Z" fill="#cc4740"/><text x="13.9" y="19.8" text-anchor="middle" font-family="Liberation Sans,sans-serif" font-weight="700" font-size="13.3" fill="#fff" stroke="#fff" stroke-width=".25" textLength="11.6" lengthAdjust="spacingAndGlyphs">IP</text></svg><div class="t" style="top:586px;font-size:20.4px;color:#1a1f71;font-weight:700;letter-spacing:0.859px;left:174.90px;">10.10.1.0/24</div><div class="t" style="top:585px;font-size:21.8px;color:#2a2f45;letter-spacing:-0.388px;left:625.80px;">Chennaidatacenter</div><div class="badge" style="left:1473.0px;top:582.9px"></div><div class="t" style="top:591px;font-size:15.7px;color:#7340d8;font-weight:700;letter-spacing:-0.345px;left:1486.00px;">Unmapped</div><div class="bar" style="left:2331.8px;top:589.9px"><i style="width:40%"></i></div><div class="t" style="top:586px;font-size:20.09px;color:#2a2f45;letter-spacing:-0.562px;left:2511.10px;">40%</div><svg class="abs" style="left:2701.00px;top:586.80px" width="18.20" height="20.70" viewBox="0 0 448 512" ><path d="M32 464a48 48 0 0 0 48 48h288a48 48 0 0 0 48-48V128H32zm272-256a16 16 0 0 1 32 0v224a16 16 0 0 1-32 0zm-96 0a16 16 0 0 1 32 0v224a16 16 0 0 1-32 0zm-96 0a16 16 0 0 1 32 0v224a16 16 0 0 1-32 0zM432 32H312l-9.400-18.700A24 24 0 0 0 281.100 0H166.800a23.720 23.720 0 0 0-21.400 13.300L136 32H16A16 16 0 0 0 0 48v32a16 16 0 0 0 16 16h416a16 16 0 0 0 16-16V48a16 16 0 0 0-16-16z" fill="#c9433e"/></svg><div class="abs" style="left:0;top:633.0px;width:2783px;height:0;border-top:1px dashed #eaecf2"></div><svg class="abs" style="left:128.30px;top:652.00px" width="27.60" height="37.00" viewBox="0 0 27.6 37" ><path d="M13.8 37L2.71 22A13.8 13.8 0 1 1 24.89 22Z" fill="#cc4740"/><text x="13.9" y="19.8" text-anchor="middle" font-family="Liberation Sans,sans-serif" font-weight="700" font-size="13.3" fill="#fff" stroke="#fff" stroke-width=".25" textLength="11.6" lengthAdjust="spacingAndGlyphs">IP</text></svg><div class="t" style="top:660px;font-size:20.4px;color:#1a1f71;font-weight:700;letter-spacing:0.859px;left:174.90px;">10.10.2.0/24</div><div class="t" style="top:658px;font-size:21.8px;color:#2a2f45;letter-spacing:-0.388px;left:625.80px;">Chennaidatacenter</div><div class="badge" style="left:1473.0px;top:655.9px"></div><div class="t" style="top:664px;font-size:15.7px;color:#7340d8;font-weight:700;letter-spacing:-0.345px;left:1486.00px;">Unmapped</div><div class="bar" style="left:2331.8px;top:662.9px"><i style="width:0%"></i></div><div class="t" style="top:660px;font-size:19.44px;color:#2a2f45;letter-spacing:-0.547px;left:2511.10px;">0%</div><svg class="abs" style="left:2701.00px;top:659.80px" width="18.20" height="20.70" viewBox="0 0 448 512" ><path d="M32 464a48 48 0 0 0 48 48h288a48 48 0 0 0 48-48V128H32zm272-256a16 16 0 0 1 32 0v224a16 16 0 0 1-32 0zm-96 0a16 16 0 0 1 32 0v224a16 16 0 0 1-32 0zm-96 0a16 16 0 0 1 32 0v224a16 16 0 0 1-32 0zM432 32H312l-9.400-18.700A24 24 0 0 0 281.100 0H166.800a23.720 23.720 0 0 0-21.400 13.300L136 32H16A16 16 0 0 0 0 48v32a16 16 0 0 0 16 16h416a16 16 0 0 0 16-16V48a16 16 0 0 0-16-16z" fill="#c9433e"/></svg><div class="abs" style="left:0;top:706.0px;width:2783px;height:0;border-top:1px dashed #eaecf2"></div><svg class="abs" style="left:128.30px;top:725.00px" width="27.60" height="37.00" viewBox="0 0 27.6 37" ><path d="M13.8 37L2.71 22A13.8 13.8 0 1 1 24.89 22Z" fill="#cc4740"/><text x="13.9" y="19.8" text-anchor="middle" font-family="Liberation Sans,sans-serif" font-weight="700" font-size="13.3" fill="#fff" stroke="#fff" stroke-width=".25" textLength="11.6" lengthAdjust="spacingAndGlyphs">IP</text></svg><div class="t" style="top:732px;font-size:20.4px;color:#1a1f71;font-weight:700;letter-spacing:0.859px;left:174.90px;">10.10.3.0/24</div><div class="t" style="top:731px;font-size:21.8px;color:#2a2f45;letter-spacing:-0.388px;left:625.80px;">Chennaidatacenter</div><div class="badge" style="left:1473.0px;top:728.9px"></div><div class="t" style="top:737px;font-size:15.7px;color:#7340d8;font-weight:700;letter-spacing:-0.345px;left:1486.00px;">Unmapped</div><div class="bar" style="left:2331.8px;top:735.9px"><i style="width:0%"></i></div><div class="t" style="top:733px;font-size:19.44px;color:#2a2f45;letter-spacing:-0.547px;left:2511.10px;">0%</div><svg class="abs" style="left:2701.00px;top:732.80px" width="18.20" height="20.70" viewBox="0 0 448 512" ><path d="M32 464a48 48 0 0 0 48 48h288a48 48 0 0 0 48-48V128H32zm272-256a16 16 0 0 1 32 0v224a16 16 0 0 1-32 0zm-96 0a16 16 0 0 1 32 0v224a16 16 0 0 1-32 0zm-96 0a16 16 0 0 1 32 0v224a16 16 0 0 1-32 0zM432 32H312l-9.400-18.700A24 24 0 0 0 281.100 0H166.800a23.720 23.720 0 0 0-21.400 13.300L136 32H16A16 16 0 0 0 0 48v32a16 16 0 0 0 16 16h416a16 16 0 0 0 16-16V48a16 16 0 0 0-16-16z" fill="#c9433e"/></svg><div class="abs" style="left:0;top:779.0px;width:2783px;height:0;border-top:1px dashed #eaecf2"></div><div class="abs" style="left:0;top:780.0px;width:2783px;height:144px;background:#fff"></div><div class="chev" style="left:13.2px;top:832.8px"></div><svg class="abs" style="left:28.00px;top:844.40px" width="9.00" height="14.00" viewBox="0 0 9 14" ><path d="M1.3 1.2L7.2 7L1.3 12.8" fill="none" stroke="#4a4d5e" stroke-width="2.4"/></svg><div class="t" style="top:841px;font-size:21.8px;color:#1a1f71;font-weight:700;letter-spacing:0.825px;left:90.20px;">10.20.0.0/16</div><div class="t" style="top:840px;font-size:23.2px;color:#2a2f45;letter-spacing:-0.291px;left:625.80px;">Chennaidatacenter</div><div class="t" style="top:840px;font-size:23.2px;color:#2a2f45;left:927.30px;">-</div><div class="t" style="top:840px;font-size:23.2px;color:#2a2f45;left:1114.20px;">0</div><div class="sbox" style="left:1472.9px;top:802.8px;width:128px;border-color:#4a90e2"></div><div class="sbox" style="left:1624.9px;top:802.8px;width:141.6px;border-color:#8e24aa"></div><div class="t" style="top:823px;font-size:28.5px;color:#1a1f71;font-weight:700;left:1538.60px;transform:translateX(-50%);">0</div><div class="t" style="top:868px;font-size:16.87px;color:#666b6b;letter-spacing:-0.482px;left:1538.36px;transform:translateX(-50%);">DDI</div><div class="t" style="top:823px;font-size:28.5px;color:#1a1f71;font-weight:700;left:1697.50px;transform:translateX(-50%);">1</div><div class="t" style="top:866px;font-size:18.3px;color:#666b6b;letter-spacing:-0.455px;left:1697.27px;transform:translateX(-50%);">Unmapped</div><div class="t" style="top:840px;font-size:23.2px;color:#2a2f45;left:1896.70px;">0</div><div class="t" style="top:840px;font-size:23.2px;color:#2a2f45;letter-spacing:-0.422px;left:2152.70px;">65.5K</div><div class="bar" style="left:2331.8px;top:846.0px"><i style="width:0%"></i></div><div class="t" style="top:843px;font-size:19.44px;color:#2a2f45;letter-spacing:-0.547px;left:2511.10px;">0%</div><svg class="abs" style="left:2662.30px;top:839.20px" width="25.30" height="22.50" viewBox="0 0 576 512" ><path d="M402.6 83.2l90.2 90.2c3.8 3.8 3.8 10 0 13.8L274.4 405.6l-92.8 10.3c-12.4 1.4-22.9-9.1-21.5-21.500l10.300-92.800L388.800 83.200c3.800-3.800 10-3.800 13.800 0zm162-22.900l-48.800-48.800c-15.200-15.200-39.900-15.200-55.200 0l-35.400 35.400c-3.800 3.800-3.800 10 0 13.800l90.200 90.200c3.800 3.800 10 3.800 13.800 0l35.400-35.400c15.200-15.300 15.200-40 0-55.200zM384 346.200V448H64V128h229.800c3.200 0 6.200-1.300 8.500-3.500l40-40c7.600-7.600 2.200-20.500-8.500-20.500H48C21.500 64 0 85.500 0 112v352c0 26.500 21.500 48 48 48h352c26.500 0 48-21.500 48-48V306.200c0-10.700-12.900-16-20.500-8.500l-40 40c-2.200 2.300-3.500 5.300-3.500 8.500z" fill="#4a90e2"/></svg><svg class="abs" style="left:2702.10px;top:839.20px" width="19.70" height="22.50" viewBox="0 0 448 512" ><path d="M32 464a48 48 0 0 0 48 48h288a48 48 0 0 0 48-48V128H32zm272-256a16 16 0 0 1 32 0v224a16 16 0 0 1-32 0zm-96 0a16 16 0 0 1 32 0v224a16 16 0 0 1-32 0zm-96 0a16 16 0 0 1 32 0v224a16 16 0 0 1-32 0zM432 32H312l-9.400-18.700A24 24 0 0 0 281.100 0H166.800a23.720 23.720 0 0 0-21.400 13.300L136 32H16A16 16 0 0 0 0 48v32a16 16 0 0 0 16 16h416a16 16 0 0 0 16-16V48a16 16 0 0 0-16-16z" fill="#c9433e"/></svg></div>
<div id="glow" class="abs"><i></i></div><div id="status" class="abs"></div>
<div class="t" style="top:1553px;font-size:24.6px;color:#dcdce2;letter-spacing:0.521px;left:11.20px;">https://10.73.17.95:9443/#/dashboard</div></div></body></html>
